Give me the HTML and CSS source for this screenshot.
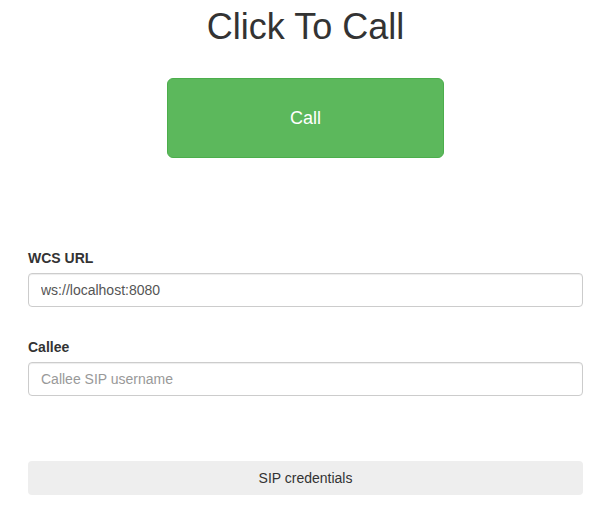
FILE: index.html
```html
<!DOCTYPE html>
<html>
<head>
<meta charset="utf-8">
<link rel="stylesheet" href="styles.css">
</head>
<body>
<div class="page">
  <h2 class="title">Click To Call</h2>
  <div class="call-row">
    <button class="call-btn" type="button">Call</button>
  </div>
  <div class="form">
    <div class="group">
      <label class="lbl" for="url">WCS URL</label>
      <input class="field" id="url" type="text" value="ws://localhost:8080">
    </div>
    <div class="group">
      <label class="lbl" for="callee">Callee</label>
      <input class="field" id="callee" type="text" placeholder="Callee SIP username">
    </div>
  </div>
  <button class="creds" type="button">SIP credentials</button>
</div>
</body>
</html>
```

FILE: styles.css
```css
* { box-sizing: border-box; }
html, body { margin: 0; padding: 0; background: #fff; }
body {
  font-family: "Liberation Sans", Arial, sans-serif;
  font-size: 14px;
  line-height: 20px;
  color: #333;
}
.page {
  padding: 7px 26px 0 28px;
  display: flex;
  flex-direction: column;
}
.title {
  margin: 0;
  font-size: 36px;
  line-height: 39.6px;
  font-weight: 400;
  text-align: center;
  color: #333;
}
.call-row {
  display: flex;
  justify-content: center;
  margin-top: 31px;
}
.call-btn {
  width: 277px;
  height: 80px;
  background: #5cb85c;
  border: 1px solid #4cae4c;
  border-radius: 6px;
  color: #fff;
  font-family: "Liberation Sans", Arial, sans-serif;
  font-size: 18px;
  padding: 2px 0 0;
}
.form {
  margin-top: 90px;
  display: flex;
  flex-direction: column;
  gap: 30px;
}
.group { display: flex; flex-direction: column; }
.lbl {
  font-weight: 700;
  margin-bottom: 5px;
}
.field {
  height: 34px;
  width: 100%;
  padding: 6px 12px;
  border: 1px solid #ccc;
  border-radius: 4px;
  font-family: "Liberation Sans", Arial, sans-serif;
  font-size: 14px;
  color: #555;
  box-shadow: inset 0 1px 1px rgba(0,0,0,.075);
}
.field::placeholder { color: #999; }
.creds {
  margin-top: 65px;
  height: 34px;
  width: 100%;
  background: #eee;
  border: none;
  border-radius: 4px;
  font-family: "Liberation Sans", Arial, sans-serif;
  font-size: 14px;
  color: #333;
}
```
